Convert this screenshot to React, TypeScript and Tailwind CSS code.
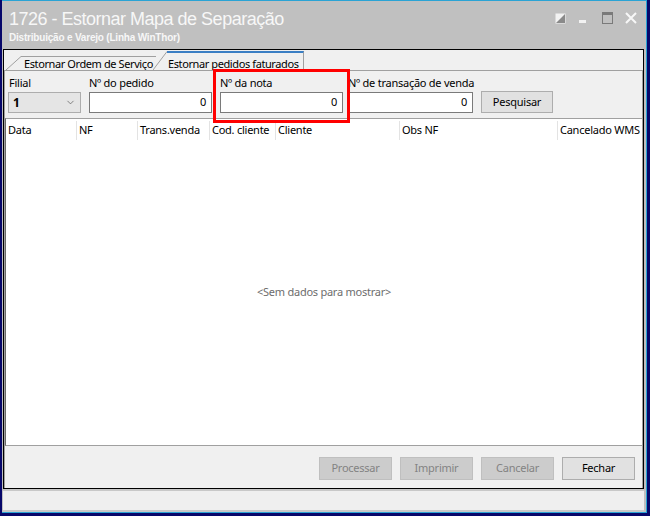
import { ChevronDown } from "lucide-react";

const columns = [
  { label: "Data", w: "w-[70px]" },
  { label: "NF", w: "w-[61px]" },
  { label: "Trans.venda", w: "w-[72px]" },
  { label: "Cod. cliente", w: "w-[66px]" },
  { label: "Cliente", w: "w-[124px]" },
  { label: "Obs NF", w: "w-[158px]" },
  { label: "Cancelado WMS", w: "flex-1" },
];

function NumInput({ w }: { w: string }) {
  return (
    <div
      className={`${w} h-[21px] bg-white border border-[#7a7a7a] flex items-center justify-end pr-[5px] text-[11px] text-black`}
    >
      0
    </div>
  );
}

function WinButton({ label, disabled }: { label: string; disabled?: boolean }) {
  return (
    <div
      className={
        disabled
          ? "w-[73px] h-[23px] flex items-center justify-center border border-[#bfbfbf] bg-[#cccccc] text-[#838383] text-[11px]"
          : "w-[73px] h-[23px] flex items-center justify-center border border-[#adadad] bg-[#e1e1e1] text-black text-[11px]"
      }
    >
      {label}
    </div>
  );
}

export default function App() {
  return (
    <div
      className="relative w-[650px] h-[516px] bg-[#07076a] flex overflow-hidden tracking-[-0.25px]"
      style={{ fontFamily: '"Noto Sans", "Open Sans", sans-serif' }}
    >
      <div className="ml-[2px] mr-[3px] mb-[3px] flex-1 flex flex-col bg-[#c0c0c0] border-t border-r border-b border-[#2aa3d4]">
        {/* title bar */}
        <div className="h-[47px] flex items-start justify-between">
          <div className="pl-[7px]">
            <div
              className="text-[18px] leading-[22px] mt-[7px] text-[#f7f7f7] tracking-[-0.5px]"
              style={{ fontFamily: '"Liberation Sans", Arial, sans-serif' }}
            >
              1726 - Estornar Mapa de Separação
            </div>
            <div
              className="text-[10px] leading-[12px] font-bold text-[#f7f7f7] mt-[2px] tracking-[-0.2px]"
              style={{ fontFamily: '"Liberation Sans", Arial, sans-serif' }}
            >
              Distribuição e Varejo (Linha WinThor)
            </div>
          </div>
          <div className="flex items-start mt-[11px] mr-[9px]">
            <svg width="11" height="11" viewBox="0 0 11 11" className="mt-[1px]">
              <rect x="0.5" y="0.5" width="10" height="10" fill="#f2f2f2" />
              <polygon points="10,1 10,10 1,10" fill="#8a8a8a" />
            </svg>
            <svg width="9" height="11" viewBox="0 0 9 11" className="ml-[12px]">
              <rect x="1" y="8" width="7" height="3" fill="#f2f2f2" />
            </svg>
            <svg width="11" height="12" viewBox="0 0 11 12" className="ml-[15px]">
              <rect x="0.5" y="0.5" width="10" height="11" fill="none" stroke="#7a7a7a" />
              <rect x="0" y="0" width="11" height="3" fill="#7a7a7a" />
            </svg>
            <svg width="12" height="12" viewBox="0 0 12 12" className="ml-[12px]">
              <path d="M1 1 L11 11 M11 1 L1 11" stroke="#f7f7f7" strokeWidth="2" />
            </svg>
          </div>
        </div>

        {/* main box */}
        <div className="ml-[1px] mr-[2px] mt-[1px] h-[440px] border border-black bg-[#f0f0f0] flex flex-col">
          {/* tabs */}
          <div className="h-[20px] flex items-end pl-[2px] text-[11px] text-black whitespace-nowrap tracking-[-0.4px]">
            <div className="flex items-end h-[14px]">
              <svg width="15" height="14" viewBox="0 0 15 14">
                <path d="M0 14 L15 0.5" stroke="#a0a0a0" fill="none" />
              </svg>
              <div className="h-[14px] w-[135px] border-t border-[#a0a0a0] flex items-center pl-[3px] leading-none">
                Estornar Ordem de Serviço
              </div>
            </div>
            <div className="flex items-end h-[19px] -ml-[3px]">
              <svg width="14" height="19" viewBox="0 0 14 19">
                <polygon points="0,19 14,0 14,19" fill="#f0f0f0" />
                <path d="M0 19 L14 0.5" stroke="#a0a0a0" fill="none" />
              </svg>
              <div className="h-[19px] w-[137px] border-t-2 border-t-[#3b7fc4] border-r border-r-[#a0a0a0] flex items-center pl-[1px] pt-[3px] leading-none">
                Estornar pedidos faturados
              </div>
            </div>
          </div>

          {/* tab page */}
          <div className="flex-1 flex flex-col border-t border-x border-[#a0a0a0]">
            {/* filters */}
            <div className="h-[47px] flex items-start pl-[3px] text-[11px] text-black whitespace-nowrap">
              <div className="w-[73px] flex flex-col">
                <div className="h-[15px] mt-[4px] pl-[1px] leading-[15px]">Filial</div>
                <div className="mt-[2px] w-[73px] h-[21px] bg-[#e5e5e5] border border-[#adadad] flex items-center justify-between pl-[4px] pr-[4px]">
                  <span className="font-bold text-[12px]">1</span>
                  <ChevronDown size={11} strokeWidth={1.5} color="#555" />
                </div>
              </div>
              <div className="w-[123px] flex flex-col ml-[8px]">
                <div className="h-[15px] mt-[4px] leading-[15px]">Nº do pedido</div>
                <div className="mt-[2px]">
                  <NumInput w="w-[123px]" />
                </div>
              </div>
              <div className="w-[123px] flex flex-col ml-[8px]">
                <div className="h-[15px] mt-[4px] leading-[15px]">Nº da nota</div>
                <div className="mt-[2px]">
                  <NumInput w="w-[123px]" />
                </div>
              </div>
              <div className="w-[125px] flex flex-col ml-[5px]">
                <div className="h-[15px] mt-[4px] leading-[15px]">Nº de transação de venda</div>
                <div className="mt-[2px]">
                  <NumInput w="w-[125px]" />
                </div>
              </div>
              <div className="ml-[8px] mt-[20px] w-[72px] h-[22px] flex items-center justify-center border border-[#adadad] bg-[#e1e1e1]">
                Pesquisar
              </div>
            </div>

            {/* grid */}
            <div className="h-[328px] bg-white border-t border-b border-[#a0a0a0] border-l border-l-[#696969] flex flex-col">
              <div className="h-[22px] flex items-center text-[11px] text-black whitespace-nowrap">
                {columns.map((c, i) => (
                  <div
                    key={c.label}
                    className={`${c.w} h-[19px] flex items-center pl-[2px] ${
                      i > 0 ? "border-l border-[#e3e3e3]" : ""
                    }`}
                  >
                    {c.label}
                  </div>
                ))}
              </div>
              <div className="flex-1 flex items-center justify-center text-[11px] text-[#6d6d6d] pb-[2px]">
                &lt;Sem dados para mostrar&gt;
              </div>
            </div>

            {/* buttons */}
            <div className="flex-1 flex justify-end items-start pt-[11px] pr-[7px] gap-[8px]">
              <WinButton label="Processar" disabled />
              <WinButton label="Imprimir" disabled />
              <WinButton label="Cancelar" disabled />
              <WinButton label="Fechar" />
            </div>
          </div>
        </div>

        {/* status bar */}
        <div className="ml-[1px] mr-[2px] flex-1 bg-[#efefef] border-t-2 border-b-2 border-[#c8c8c8]" />
      </div>

      {/* highlight annotation */}
      <div className="absolute left-[213px] top-[69px] w-[137px] h-[54px] border-[3px] border-[#ff0000] pointer-events-none" />
    </div>
  );
}
